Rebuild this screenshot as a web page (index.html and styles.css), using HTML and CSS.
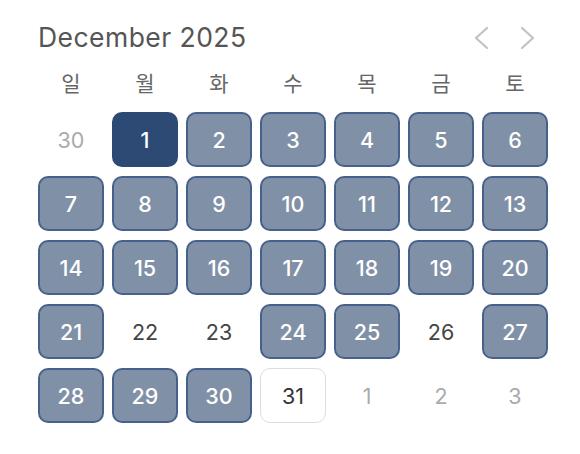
FILE: index.html
```html
<!DOCTYPE html>
<html lang="ko">
<head>
<meta charset="utf-8">
<link rel="stylesheet" href="styles.css">
</head>
<body>
<div class="cal">
  <div class="head">
    <div class="title">December 2025</div>
    <div class="nav">
      <svg class="chev" width="16" height="24" viewBox="0 0 16 24"><path d="M14 2 L3 12 L14 22" fill="none" stroke="#c2c2c2" stroke-width="2.2" stroke-linecap="round" stroke-linejoin="round"/></svg>
      <svg class="chev" width="16" height="24" viewBox="0 0 16 24"><path d="M2 2 L13 12 L2 22" fill="none" stroke="#c2c2c2" stroke-width="2.2" stroke-linecap="round" stroke-linejoin="round"/></svg>
    </div>
  </div>
  <div class="week">
    <div>일</div><div>월</div><div>화</div><div>수</div><div>목</div><div>금</div><div>토</div>
  </div>
  <div class="days">
    <div class="d muted">30</div>
    <div class="d sel">1</div>
    <div class="d on">2</div>
    <div class="d on">3</div>
    <div class="d on">4</div>
    <div class="d on">5</div>
    <div class="d on">6</div>
    <div class="d on">7</div>
    <div class="d on">8</div>
    <div class="d on">9</div>
    <div class="d on">10</div>
    <div class="d on">11</div>
    <div class="d on">12</div>
    <div class="d on">13</div>
    <div class="d on">14</div>
    <div class="d on">15</div>
    <div class="d on">16</div>
    <div class="d on">17</div>
    <div class="d on">18</div>
    <div class="d on">19</div>
    <div class="d on">20</div>
    <div class="d on">21</div>
    <div class="d">22</div>
    <div class="d">23</div>
    <div class="d on">24</div>
    <div class="d on">25</div>
    <div class="d">26</div>
    <div class="d on">27</div>
    <div class="d on">28</div>
    <div class="d on">29</div>
    <div class="d on">30</div>
    <div class="d today">31</div>
    <div class="d muted">1</div>
    <div class="d muted">2</div>
    <div class="d muted">3</div>
  </div>
</div>
</body>
</html>
```
FILE: styles.css
```css
html, body {
  margin: 0;
  padding: 0;
  background: #ffffff;
}
body {
  font-family: Inter, "Noto Sans CJK KR", sans-serif;
}
.cal {
  width: 510px;
  padding: 20px 0 0 38px;
}
.head {
  display: flex;
  justify-content: space-between;
  align-items: center;
  height: 34px;
  margin-bottom: 8px;
}
.title {
  font-size: 26.5px;
  color: #555555;
  letter-spacing: 0.45px;
}
.nav {
  display: flex;
  gap: 31px;
  margin-right: 12px;
  padding-top: 2px;
}
.chev {
  display: block;
}
.week {
  display: grid;
  grid-template-columns: repeat(7, 66px);
  column-gap: 8px;
  height: 40px;
  align-items: center;
  margin-bottom: 10px;
}
.week div {
  text-align: center;
  font-family: "Noto Sans CJK KR", sans-serif;
  font-size: 21px;
  color: #666666;
}
.days {
  display: grid;
  grid-template-columns: repeat(7, 66px);
  grid-auto-rows: 55px;
  column-gap: 8px;
  row-gap: 9px;
}
.d {
  box-sizing: border-box;
  display: flex;
  align-items: center;
  justify-content: center;
  font-size: 21.5px;
  color: #444444;
  border-radius: 10px;
}
.d.on {
  background: #8091a7;
  border: 2px solid #48618a;
  color: #ffffff;
  font-weight: 500;
}
.d.sel {
  background: #2c4a73;
  border: 2px solid #2c4a73;
  color: #ffffff;
  font-weight: 500;
}
.d.today {
  border: 1.5px solid #dddddd;
  color: #333333;
}
.d.muted {
  color: #aaaaaa;
}
```
